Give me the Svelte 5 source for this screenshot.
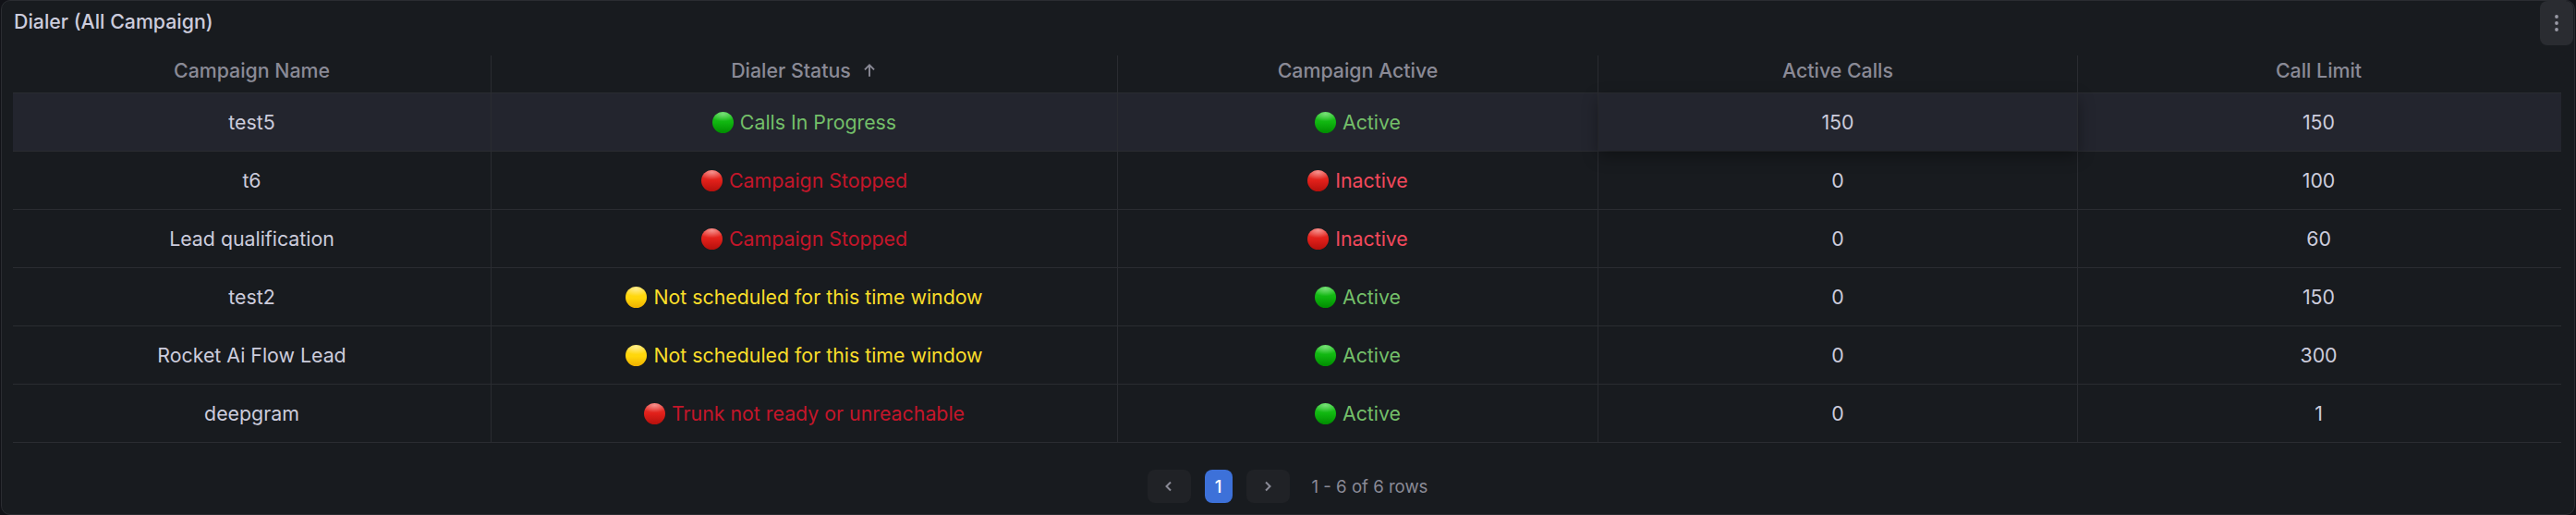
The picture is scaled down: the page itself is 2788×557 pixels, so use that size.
<script>
  // Column headers
  const columns = ['Campaign Name', 'Dialer Status', 'Campaign Active', 'Active Calls', 'Call Limit'];

  // Table rows
  const rows = [
    { name: 'test5', status: 'Calls In Progress', statusType: 'green', active: true, calls: 150, limit: 150 },
    { name: 't6', status: 'Campaign Stopped', statusType: 'red', active: false, calls: 0, limit: 100 },
    { name: 'Lead qualification', status: 'Campaign Stopped', statusType: 'red', active: false, calls: 0, limit: 60 },
    { name: 'test2', status: 'Not scheduled for this time window', statusType: 'yellow', active: true, calls: 0, limit: 150 },
    { name: 'Rocket Ai Flow Lead', status: 'Not scheduled for this time window', statusType: 'yellow', active: true, calls: 0, limit: 300 },
    { name: 'deepgram', status: 'Trunk not ready or unreachable', statusType: 'red', active: true, calls: 0, limit: 1 }
  ];
</script>

<div class="panel">
  <div class="panel-header">
    <h2 class="title">Dialer (All Campaign)</h2>
    <button class="menu-button" aria-label="Panel menu">
      <svg width="6" height="20" viewBox="0 0 6 20"><circle cx="3" cy="3" r="1.9" /><circle cx="3" cy="10" r="1.9" /><circle cx="3" cy="17" r="1.9" /></svg>
    </button>
  </div>

  <div class="table">
    <div class="row head">
      {#each columns as col, i}
        <div class="cell">
          {col}
          {#if i === 1}
            <svg class="sort" width="18" height="18" viewBox="0 0 16 16"><path d="M8 14V3M3.5 7.5 8 3l4.500 4.500" /></svg>
          {/if}
        </div>
      {/each}
    </div>

    {#each rows as row, i}
      <div class="row body" class:hovered={i === 0}>
        <div class="cell">{row.name}</div>
        <div class="cell {row.statusType}"><span class="dot {row.statusType}"></span>{row.status}</div>
        <div class="cell {row.active ? 'green' : 'bright-red'}"><span class="dot {row.active ? 'green' : 'red'}"></span>{row.active ? 'Active' : 'Inactive'}</div>
        <div class="cell" class:hover-cell={i === 0}>{row.calls}</div>
        <div class="cell">{row.limit}</div>
      </div>
    {/each}
  </div>

  <div class="pager">
    <button class="page-btn" aria-label="Previous page">
      <svg width="16" height="16" viewBox="0 0 16 16"><path d="M10 3.500 5.500 8l4.500 4.500" /></svg>
    </button>
    <button class="page-num">1</button>
    <button class="page-btn" aria-label="Next page">
      <svg width="16" height="16" viewBox="0 0 16 16"><path d="M6 3.500 10.500 8 6 12.500" /></svg>
    </button>
    <span class="summary">1 - 6 of 6 rows</span>
  </div>
</div>

<style>
  :global(body) {
    margin: 0;
    background: #111217;
  }

  .panel {
    box-sizing: border-box;
    width: 2786px;
    height: 557px;
    margin-left: 1px;
    background: #181b1f;
    border: 1px solid #2a2c31;
    border-radius: 10px;
    font-family: Inter, "Liberation Sans", sans-serif;
    font-size: 21.33px;
    color: #ccccdc;
    overflow: hidden;
  }

  .panel-header {
    display: flex;
    justify-content: space-between;
    align-items: flex-start;
    height: 59px;
    padding-left: 13px;
    padding-right: 1px;
  }

  .title {
    margin: 8px 0 0;
    font-size: 21.33px;
    line-height: 28px;
    font-weight: 500;
    color: #ccccdc;
  }

  .menu-button {
    display: flex;
    align-items: center;
    justify-content: center;
    width: 36px;
    height: 48px;
    padding: 0;
    border: none;
    border-radius: 8px;
    background: #2a2c31;
  }

  .menu-button svg {
    fill: #9a9aa6;
  }

  .table {
    margin: 0 14px 0 12px;
  }

  .row {
    display: grid;
    grid-template-columns: 518px 678px 520px 519px 521px;
  }

  .head {
    height: 41px;
    color: #8a8a96;
    font-weight: 500;
    border-bottom: 1px solid #2a2c31;
    box-sizing: border-box;
  }

  .head .cell {
    gap: 4px;
    padding-bottom: 8px;
  }

  .body {
    height: 63px;
    box-sizing: border-box;
    border-bottom: 1px solid #2a2c31;
  }

  .hovered {
    background: #23252e;
  }

  .cell {
    display: flex;
    align-items: center;
    justify-content: center;
    gap: 7px;
    border-right: 1px solid #2a2c31;
    box-sizing: border-box;
  }

  .cell:last-child {
    border-right: none;
  }

  .hover-cell {
    box-shadow: 0 6px 16px rgba(0, 0, 0, 0.35);
    background: #23252e;
    position: relative;
  }

  .sort {
    margin-left: 7px;
    fill: none;
    stroke: #8a8a96;
    stroke-width: 1.7;
  }

  .green { color: #73bf69; }
  .red { color: #c4162a; }
  .bright-red { color: #f2495c; }
  .yellow { color: #fade2a; }

  .dot {
    width: 23px;
    height: 23px;
    border-radius: 50%;
    flex: none;
  }

  .dot.green {
    background: radial-gradient(ellipse 65% 35% at 50% 10%, rgba(255, 255, 255, 0.4), transparent), linear-gradient(180deg, #22cc22 0%, #10b510 50%, #008c00 100%);
  }

  .dot.red {
    background: radial-gradient(ellipse 65% 35% at 50% 10%, rgba(255, 255, 255, 0.45), transparent), linear-gradient(180deg, #ee3a32 0%, #e0201a 50%, #b5100c 100%);
  }

  .dot.yellow {
    background: radial-gradient(ellipse 65% 35% at 50% 10%, rgba(255, 255, 255, 0.5), transparent), linear-gradient(180deg, #ffdc20 0%, #ffd60a 55%, #eeb000 100%);
  }

  .pager {
    display: flex;
    align-items: center;
    justify-content: center;
    gap: 15px;
    margin-top: 29px;
    padding-right: 1px;
  }

  .page-btn,
  .page-num {
    display: flex;
    align-items: center;
    justify-content: center;
    height: 36px;
    padding: 0;
    border: none;
    border-radius: 8px;
    font-family: inherit;
  }

  .page-btn {
    width: 47px;
    background: #202226;
  }

  .page-btn svg {
    fill: none;
    stroke: #8a8a96;
    stroke-width: 2;
  }

  .page-num {
    width: 30px;
    background: #3d71d9;
    color: #fff;
    font-size: 18.5px;
    font-weight: 500;
  }

  .summary {
    margin-left: 9px;
    color: #8a8a96;
    font-size: 18.6px;
  }
</style>
